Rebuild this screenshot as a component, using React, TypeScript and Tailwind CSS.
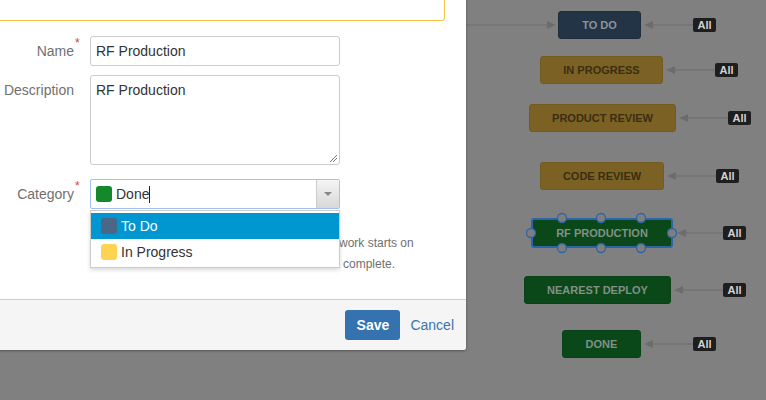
import React from "react";

type Node = { label: string; left: number; top: number; w: number; h: number; kind: "blue" | "yellow" | "green" | "selected" };

const nodes: Node[] = [
  { label: "TO DO", left: 558, top: 11, w: 83, h: 28, kind: "blue" },
  { label: "IN PROGRESS", left: 540, top: 56, w: 123, h: 28, kind: "yellow" },
  { label: "PRODUCT REVIEW", left: 529, top: 104, w: 147, h: 28, kind: "yellow" },
  { label: "CODE REVIEW", left: 540, top: 162, w: 124, h: 28, kind: "yellow" },
  { label: "RF PRODUCTION", left: 531, top: 218, w: 142, h: 30, kind: "selected" },
  { label: "NEAREST DEPLOY", left: 524, top: 276, w: 147, h: 28, kind: "green" },
  { label: "DONE", left: 562, top: 330, w: 79, h: 28, kind: "green" },
];

const kindClass: Record<Node["kind"], string> = {
  blue: "bg-[#233446] text-[#8b939b] border border-[#1f2d3b]",
  yellow: "bg-[#7b6224] text-[#3a2e12] border border-[#735b20]",
  green: "bg-[#0a4819] text-[#829085] border border-[#094217]",
  selected: "bg-[#0a4819] text-[#829085] border-2 border-[#2c64aa]",
};

// [y, arrowTipX, badgeLeft]
const links: [number, number, number][] = [
  [25, 644, 693],
  [70, 666, 715],
  [118, 679, 728],
  [176, 667, 716],
  [233, 677, 723],
  [290, 674, 723],
  [344, 644, 693],
];

function Graph() {
  return (
    <div className="absolute inset-0">
      <svg width={766} height={400} className="absolute inset-0">
        <line x1={440} y1={25} x2={548} y2={25} stroke="#6c6c6c" strokeWidth={1} />
        <polygon points="547,21 556,25 547,29" fill="#6c6c6c" />
        {links.map(([y, tip, badge], i) => (
          <g key={i}>
            <line x1={tip + 8} y1={y} x2={badge} y2={y} stroke="#6c6c6c" strokeWidth={1} />
            <polygon points={`${tip},${y} ${tip + 9},${y - 4} ${tip + 9},${y + 4}`} fill="#6c6c6c" />
          </g>
        ))}
      </svg>
      {nodes.map((n) => (
        <div
          key={n.label}
          className={`absolute flex items-center justify-center rounded-[3px] text-[11px] font-bold leading-none ${kindClass[n.kind]}`}
          style={{ left: n.left, top: n.top, width: n.w, height: n.h }}
        >
          {n.label}
        </div>
      ))}
      {links.map(([y, , badge], i) => (
        <div
          key={i}
          className="absolute flex h-[14px] w-[23px] items-center justify-center rounded-[2px] bg-[#1e1e1e] text-[11px] font-bold leading-none text-[#d2d2d2]"
          style={{ left: badge, top: y - 7 }}
        >
          All
        </div>
      ))}
      <svg width={766} height={400} className="pointer-events-none absolute inset-0">
        {[
          [562, 218],
          [601, 218],
          [641, 218],
          [562, 248],
          [601, 248],
          [641, 248],
          [531, 233],
          [672, 233],
        ].map(([cx, cy], i) => (
          <circle key={i} cx={cx} cy={cy} r={4.5} fill="#7e7e7e" stroke="#2c64aa" strokeWidth={1.3} />
        ))}
      </svg>
    </div>
  );
}

function Label({ text, required }: { text: string; required?: boolean }) {
  return (
    <div className="relative w-[93px] shrink-0 pt-[6px] text-right text-[14px] leading-[18px] text-[#707070]">
      {text}
      {required && <span className="absolute left-[94px] top-[1px] text-[12px] leading-none text-[#d04437]">*</span>}
    </div>
  );
}

function Modal() {
  return (
    <div className="absolute left-[-40px] top-[-60px] w-[506px] rounded-b-[3px] bg-white shadow-[0_1px_3px_rgba(0,0,0,0.35)]">
      <div className="px-[21px] pt-[20px]">
        <div className="h-[61px] rounded-[3px] border border-[#f6c342] bg-white" />
        <div className="mt-[15px] flex flex-col">
          <div className="flex items-start">
            <Label text="Name" required />
            <div className="ml-[16px] h-[30px] w-[250px] rounded-[3px] border border-[#cccccc] px-[5px] text-[14px] leading-[28px] text-[#333]">
              RF Production
            </div>
          </div>
          <div className="mt-[9px] flex items-start">
            <Label text="Description" />
            <div className="relative ml-[16px] h-[90px] w-[250px] rounded-[3px] border border-[#cccccc] px-[5px] pt-[4px] text-[14px] leading-[20px] text-[#333]">
              RF Production
              <svg width={9} height={9} className="absolute bottom-[1px] right-[1px]">
                <line x1={1} y1={8} x2={8} y2={1} stroke="#777" strokeWidth={1} />
                <line x1={4} y1={8} x2={8} y2={4} stroke="#777" strokeWidth={1} />
              </svg>
            </div>
          </div>
          <div className="mt-[14px] flex items-start">
            <Label text="Category" required />
            <div className="relative ml-[16px] w-[250px]">
              <div className="flex h-[30px] items-center rounded-[2px] border border-[#a3c2f0] pl-[5px] text-[14px] text-[#333]">
                <span className="h-[16px] w-[16px] rounded-[3px] bg-[#14892c]" />
                <span className="ml-[4px]">Done</span>
                <span className="h-[17px] w-px bg-[#222]" />
                <div className="absolute bottom-[1px] right-[1px] top-[1px] flex w-[23px] items-center justify-center border-l border-[#cccccc] bg-gradient-to-b from-[#f4f4f4] to-[#d8d8d8]">
                  <span className="h-0 w-0 border-l-[4px] border-r-[4px] border-t-[4px] border-l-transparent border-r-transparent border-t-[#888]" />
                </div>
              </div>
              <div className="absolute left-0 top-[31px] z-10 w-[250px] border border-[#cccccc] bg-white pb-[2px] pt-[2px] text-[14px] shadow-[0_2px_4px_rgba(0,0,0,0.15)]">
                <div className="flex h-[26px] items-center bg-[#0096cf] pl-[10px] text-white">
                  <span className="h-[16px] w-[16px] rounded-[3px] bg-[#4a6785]" />
                  <span className="ml-[4px]">To Do</span>
                </div>
                <div className="flex h-[26px] items-center pl-[10px] text-[#333]">
                  <span className="h-[16px] w-[16px] rounded-[3px] bg-[#ffd351]" />
                  <span className="ml-[4px]">In Progress</span>
                </div>
              </div>
            </div>
          </div>
          <div className="ml-[109px] mt-[3px] text-[12px] leading-[21px] text-[#707070]">
            <div className="h-[21px]" />
            <div className="flex whitespace-nowrap">
              <span className="w-[249px] shrink-0" />
              <span>work starts on</span>
            </div>
            <div className="flex whitespace-nowrap">
              <span className="w-[253px] shrink-0" />
              <span>complete.</span>
            </div>
          </div>
        </div>
      </div>
      <div className="mt-[24px] flex h-[51px] items-center justify-end gap-[10px] rounded-b-[3px] border-t border-[#cccccc] bg-[#f5f5f5] pr-[12px]">
        <div className="flex h-[30px] w-[55px] items-center justify-center rounded-[3px] bg-[#3572b0] text-[14px] font-bold text-white">
          Save
        </div>
        <div className="text-[14px] text-[#3b73af]">Cancel</div>
      </div>
    </div>
  );
}

export default function App() {
  return (
    <div className="relative h-[400px] w-[766px] overflow-hidden bg-[#808080] font-['Liberation_Sans',Arial,sans-serif]">
      <Graph />
      <Modal />
    </div>
  );
}
